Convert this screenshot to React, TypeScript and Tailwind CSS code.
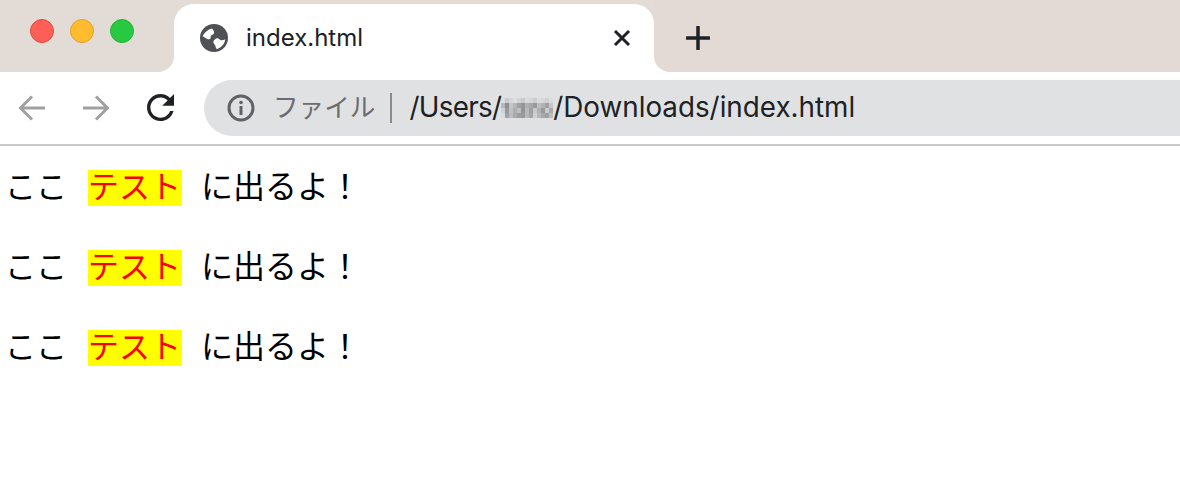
import React from "react";

const jp = "font-['Noto_Sans_CJK_JP','Liberation_Sans',sans-serif]";

const Line = () => (
  <div className={`flex h-[80px] items-start pl-[5px] text-black ${jp}`}>
    <span className="h-[36px] w-[83px] text-[31px] leading-[29px]">ここ</span>
    <span className="h-[36px] w-[94px] bg-[#ffff00] text-[31px] leading-[29px] text-[#ff0000]">テスト</span>
    <span className="ml-[19px] text-[32px] leading-[29px]">に出るよ！</span>
  </div>
);

// the blurred user name in the url
const mosaic = [
  "#dcdddf", "#c9cacc", "#d6d7d9", "#dcdddf", "#d2d3d5", "#c8c9cb", "#d8d9db", "#d4d5d7", "#cccdcf", "#dadbdd", "#d6d7d9", "#d0d1d3", "#dcdddf",
  "#b8b9bb", "#8f9092", "#c4c5c7", "#b4b5b7", "#a0a1a3", "#959698", "#b0b1b3", "#a6a7a9", "#989a9c", "#bcbdbf", "#b2b3b5", "#a0a1a3", "#c6c7c9",
  "#cfd0d2", "#9a9b9d", "#c0c1c3", "#aeafb1", "#bcbdbf", "#949597", "#b8b9bb", "#a0a1a3", "#c8c9cb", "#b0b1b3", "#989a9c", "#cacbcd", "#a8a9ab",
  "#dadbdd", "#a0a1a3", "#bcbdbf", "#a8a9ab", "#9c9d9f", "#989a9c", "#b6b7b9", "#a4a5a7", "#ccd0d2", "#b8b9bb", "#a8a9ab", "#a0a1a3", "#bcbdbf",
];

const Blur = () => (
  <span className="grid h-[20px] w-[52px] grid-cols-[repeat(13,4px)] grid-rows-[repeat(4,5px)] self-center">
    {mosaic.map((c, i) => (
      <span key={i} style={{ backgroundColor: c }} />
    ))}
  </span>
);

export default function App() {
  return (
    <div className="h-[492px] w-[1180px] overflow-hidden bg-white font-['Inter','Liberation_Sans',sans-serif]">
      {/* tab strip */}
      <div className="flex h-[72px] bg-white">
        <div className="flex w-[174px] gap-[16px] rounded-br-[16px] bg-[#e2dbd6] pl-[30px] pt-[19px]">
          <span className="h-6 w-6 rounded-full border border-[#e0493f] bg-[#ff5f57]" />
          <span className="h-6 w-6 rounded-full border border-[#e0a02a] bg-[#febc2e]" />
          <span className="h-6 w-6 rounded-full border border-[#1fb53a] bg-[#28c840]" />
        </div>
        <div className="w-[480px] bg-[#e2dbd6] pt-1">
          <div className="flex h-[68px] items-center rounded-t-[20px] bg-white pl-[26px] pr-[22px]">
            <svg width="28" height="28" viewBox="0 0 28 28">
              <circle cx="14" cy="14" r="14" fill="#4f5155" />
              <path fill="#fff" d="M2.6 12.5C4 9 8 5.5 12 4.6c1.6 1.6 2.4 3.2 2 4.6-.5 1.6-2.6 1.4-3.2 2.6-.5 1.2.4 2-.6 3-1.3 1.2-3.4.2-4.6-.8-1.2-1-2.4-1.6-3-1.5z" />
              <path fill="#fff" d="M15.4 15c1.6-1.4 3.4-.6 4.6.8 1.2.9 3.4.6 5.2-.6-.5 4.4-3.4 8.4-8.6 9.8-1-1.3-1-2.8-1.6-4-.6-1-1.6-1.6-1.6-3 0-1.2.9-2.2 2-3z" />
            </svg>
            <span className="ml-[18px] text-[24px] text-[#202124]">index.html</span>
            <svg className="ml-auto" width="20" height="20" viewBox="0 0 20 20">
              <path d="M3 3l14 14M17 3L3 17" stroke="#202124" strokeWidth="3" />
            </svg>
          </div>
        </div>
        <div className="flex-1 rounded-bl-[16px] bg-[#e3dad5] pl-[32px] pt-[26px]">
          <svg width="24" height="24" viewBox="0 0 24 24">
            <path d="M12 1v22M1 12h22" stroke="#202124" strokeWidth="3.5" strokeLinecap="round" />
          </svg>
        </div>
      </div>

      {/* toolbar */}
      <div className="flex h-[74px] items-start border-b-2 border-[#c9c9c9] bg-white pl-[18px] pt-[8px]">
        <svg className="mt-[14px]" width="28" height="28" viewBox="0 0 28 28" fill="none" stroke="#a0a0a0" strokeWidth="3">
          <path d="M27 14H3M14 2.5L2.5 14 14 25.5" />
        </svg>
        <svg className="ml-[36px] mt-[14px]" width="28" height="28" viewBox="0 0 28 28" fill="none" stroke="#a0a0a0" strokeWidth="3">
          <path d="M1 14h24M14 2.5L25.5 14 14 25.5" />
        </svg>
        <svg className="ml-[37px] mt-[14px]" width="27" height="27" viewBox="4 4 16 16">
          <path
            fill="#202124"
            d="M17.65 6.35C16.2 4.9 14.21 4 12 4c-4.42 0-7.99 3.58-7.99 8s3.57 8 7.99 8c3.73 0 6.84-2.55 7.73-6h-2.08c-.82 2.33-3.04 4-5.65 4-3.31 0-6-2.69-6-6s2.69-6 6-6c1.66 0 3.14.69 4.22 1.78L13 11h7V4l-2.35 2.35z"
          />
        </svg>
        <div className="ml-[30px] flex h-[56px] flex-1 items-center rounded-l-[28px] bg-[#e0e1e3] pl-[23px]">
          <svg width="28" height="28" viewBox="0 0 28 28" fill="none">
            <circle cx="14" cy="14" r="12" stroke="#5f6368" strokeWidth="3" />
            <circle cx="14" cy="8.5" r="1.8" fill="#5f6368" />
            <path d="M14 12v9" stroke="#5f6368" strokeWidth="3" />
          </svg>
          <span className={`mb-[4px] ml-[18px] text-[25.6px] text-[#6a6c70] ${jp}`}>ファイル</span>
          <span className="ml-[15px] h-[30px] w-[2px] bg-[#8a8b8e]" />
          <span className="ml-[17px] flex items-center text-[27.8px] text-[#202124]">
            <span className="tracking-[-0.7px]">/Users/</span>
            <Blur />
            /Downloads/index.html
          </span>
        </div>
      </div>

      {/* page */}
      <div className="pt-[24px]">
        <Line />
        <Line />
        <Line />
      </div>
    </div>
  );
}
